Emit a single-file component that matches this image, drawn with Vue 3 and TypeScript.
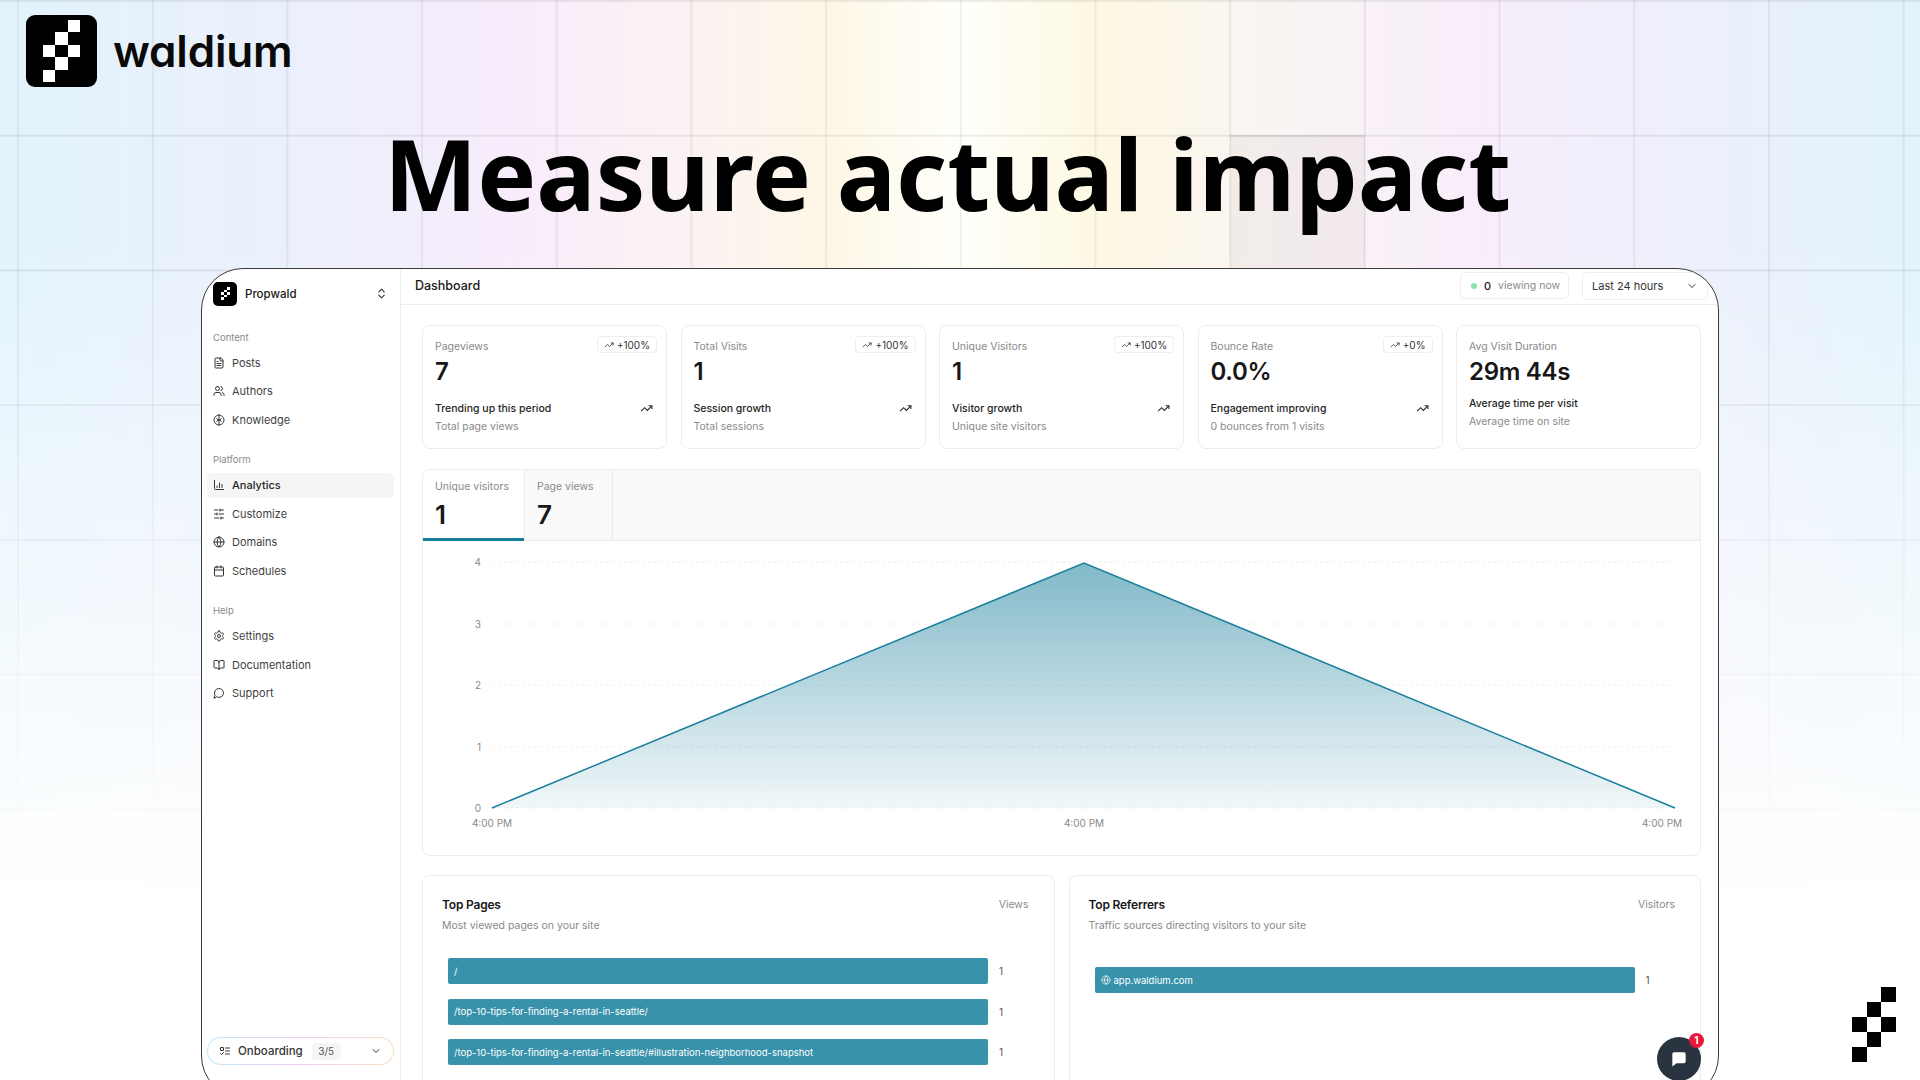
<script setup lang="ts">
const circle = 'M12 2a10 10 0 1 0 0 20 10 10 0 0 0 0-20'
const icons: Record<string, string[]> = {
  file: ['M15 2H6a2 2 0 0 0-2 2v16a2 2 0 0 0 2 2h12a2 2 0 0 0 2-2V7Z', 'M14 2v4a2 2 0 0 0 2 2h4', 'M10 9H8', 'M16 13H8', 'M16 17H8'],
  users: ['M16 21v-2a4 4 0 0 0-4-4H6a4 4 0 0 0-4 4v2', 'M9 3a4 4 0 1 0 0 8 4 4 0 0 0 0-8', 'M22 21v-2a4 4 0 0 0-3-3.87', 'M16 3.13a4 4 0 0 1 0 7.75'],
  knowledge: [circle, 'M12 2v20', 'M7.5 9.5 12 13l4.5-3.5', 'M7.5 14.5 12 11l4.5 3.5'],
  chart: ['M3 3v16a2 2 0 0 0 2 2h16', 'M8 17v-3', 'M13 17V8', 'M18 17v-6'],
  sliders: ['M21 4h-7', 'M10 4H3', 'M21 12h-9', 'M8 12H3', 'M21 20h-5', 'M12 20H3', 'M14 2v4', 'M8 10v4', 'M16 18v4'],
  globe: [circle, 'M12 2a14.5 14.5 0 0 0 0 20 14.5 14.5 0 0 0 0-20', 'M2 12h20'],
  calendar: ['M8 2v4', 'M16 2v4', 'M5 4h14a2 2 0 0 1 2 2v14a2 2 0 0 1-2 2H5a2 2 0 0 1-2-2V6a2 2 0 0 1 2-2', 'M3 10h18'],
  settings: ['M12.22 2h-.44a2 2 0 0 0-2 2v.18a2 2 0 0 1-1 1.73l-.43.25a2 2 0 0 1-2 0l-.15-.08a2 2 0 0 0-2.73.73l-.22.38a2 2 0 0 0 .73 2.73l.15.1a2 2 0 0 1 1 1.72v.51a2 2 0 0 1-1 1.74l-.15.09a2 2 0 0 0-.73 2.73l.22.38a2 2 0 0 0 2.73.73l.15-.08a2 2 0 0 1 2 0l.43.25a2 2 0 0 1 1 1.73V20a2 2 0 0 0 2 2h.44a2 2 0 0 0 2-2v-.18a2 2 0 0 1 1-1.73l.43-.25a2 2 0 0 1 2 0l.15.08a2 2 0 0 0 2.73-.73l.22-.39a2 2 0 0 0-.73-2.73l-.15-.08a2 2 0 0 1-1-1.74v-.5a2 2 0 0 1 1-1.74l.15-.09a2 2 0 0 0 .73-2.73l-.22-.38a2 2 0 0 0-2.73-.73l-.15.08a2 2 0 0 1-2 0l-.43-.25a2 2 0 0 1-1-1.73V4a2 2 0 0 0-2-2z', 'M12 9a3 3 0 1 0 0 6 3 3 0 0 0 0-6'],
  book: ['M12 7v14', 'M3 18a1 1 0 0 1-1-1V4a1 1 0 0 1 1-1h5a4 4 0 0 1 4 4 4 4 0 0 1 4-4h5a1 1 0 0 1 1 1v13a1 1 0 0 1-1 1h-6a3 3 0 0 0-3 3 3 3 0 0 0-3-3z'],
  message: ['M7.9 20A9 9 0 1 0 4 16.1L2 22Z'],
  trend: ['M22 7 13.5 15.5 8.5 10.5 2 17', 'M16 7h6v6'],
  updown: ['m7 15 5 5 5-5', 'm7 9 5-5 5 5'],
  down: ['m6 9 6 6 6-6'],
  todo: ['M4 5h4a1 1 0 0 1 1 1v4a1 1 0 0 1-1 1H4a1 1 0 0 1-1-1V6a1 1 0 0 1 1-1', 'm3 17 2 2 4-4', 'M13 6h8', 'M13 12h8', 'M13 18h8'],
}

const navGroups = [
  { label: 'Content', items: [{ name: 'Posts', icon: 'file' }, { name: 'Authors', icon: 'users' }, { name: 'Knowledge', icon: 'knowledge' }] },
  { label: 'Platform', items: [{ name: 'Analytics', icon: 'chart', active: true }, { name: 'Customize', icon: 'sliders' }, { name: 'Domains', icon: 'globe' }, { name: 'Schedules', icon: 'calendar' }] },
  { label: 'Help', items: [{ name: 'Settings', icon: 'settings' }, { name: 'Documentation', icon: 'book' }, { name: 'Support', icon: 'message' }] },
]

const stats = [
  { label: 'Pageviews', value: '7', delta: '+100%', title: 'Trending up this period', sub: 'Total page views' },
  { label: 'Total Visits', value: '1', delta: '+100%', title: 'Session growth', sub: 'Total sessions' },
  { label: 'Unique Visitors', value: '1', delta: '+100%', title: 'Visitor growth', sub: 'Unique site visitors' },
  { label: 'Bounce Rate', value: '0.0%', delta: '+0%', title: 'Engagement improving', sub: '0 bounces from 1 visits' },
  { label: 'Avg Visit Duration', value: '29m 44s', delta: '', title: 'Average time per visit', sub: 'Average time on site' },
]

const yTicks = [
  { label: '4', y: 21 },
  { label: '3', y: 83 },
  { label: '2', y: 144 },
  { label: '1', y: 206 },
  { label: '0', y: 267 },
]

const pages = ['/', '/top-10-tips-for-finding-a-rental-in-seattle/', '/top-10-tips-for-finding-a-rental-in-seattle/#illustration-neighborhood-snapshot']
const pixelCells = [2, 4, 6, 8, 10, 13]
const markCells = [2, 4, 6, 8, 10, 12]
</script>

<template>
  <div class="page">
    <div class="backdrop"><div class="hot-cell"></div></div>

    <header class="brand">
      <div class="logo">
        <div class="pixels">
          <i v-for="n in 15" :key="n" :class="{ on: markCells.includes(n - 1) }"></i>
        </div>
      </div>
      <span class="wordmark">waldium</span>
    </header>

    <h1 class="headline">Measure actual impact</h1>

    <div class="frame">
      <aside class="sidebar">
        <div class="workspace">
          <div class="ws-logo">
            <div class="pixels">
              <i v-for="n in 15" :key="n" :class="{ on: markCells.includes(n - 1) }"></i>
            </div>
          </div>
          <span class="ws-name">Propwald</span>
          <svg class="ws-toggle" viewBox="0 0 24 24"><path v-for="d in icons.updown" :key="d" :d="d" /></svg>
        </div>

        <nav class="nav">
          <section v-for="group in navGroups" :key="group.label" class="nav-group">
            <div class="nav-label">{{ group.label }}</div>
            <a v-for="item in group.items" :key="item.name" :class="['nav-item', { active: item.active }]">
              <svg class="nav-icon" viewBox="0 0 24 24"><path v-for="d in icons[item.icon]" :key="d" :d="d" /></svg>
              {{ item.name }}
            </a>
          </section>
        </nav>

        <div class="onboarding">
          <div class="onboarding-inner">
            <svg class="nav-icon" viewBox="0 0 24 24"><path v-for="d in icons.todo" :key="d" :d="d" /></svg>
            <span class="ob-text">Onboarding</span>
            <span class="ob-count">3/5</span>
            <svg class="ob-chevron" viewBox="0 0 24 24"><path v-for="d in icons.down" :key="d" :d="d" /></svg>
          </div>
        </div>
      </aside>

      <main class="main">
        <div class="topbar">
          <span class="topbar-title">Dashboard</span>
          <div class="live">
            <span class="live-dot"></span>
            <b>0</b>
            <span class="live-text">viewing now</span>
          </div>
          <div class="range">
            Last 24 hours
            <svg class="ob-chevron" viewBox="0 0 24 24"><path v-for="d in icons.down" :key="d" :d="d" /></svg>
          </div>
        </div>

        <div class="content">
          <div class="stats">
            <div v-for="s in stats" :key="s.label" :class="['stat', { compact: !s.delta }]">
              <div class="stat-label">{{ s.label }}</div>
              <div v-if="s.delta" class="delta">
                <svg viewBox="0 0 24 24"><path v-for="d in icons.trend" :key="d" :d="d" /></svg>
                {{ s.delta }}
              </div>
              <div class="stat-value">{{ s.value }}</div>
              <div class="stat-title">
                {{ s.title }}
                <svg v-if="s.delta" viewBox="0 0 24 24"><path v-for="d in icons.trend" :key="d" :d="d" /></svg>
              </div>
              <div class="stat-sub">{{ s.sub }}</div>
            </div>
          </div>

          <div class="chart-card">
            <div class="tabs">
              <div class="tab active">
                <span>Unique visitors</span>
                <b>1</b>
              </div>
              <div class="tab">
                <span>Page views</span>
                <b>7</b>
              </div>
            </div>
            <svg class="chart" width="1276" height="314" viewBox="0 0 1276 314">
              <defs>
                <linearGradient id="area" x1="0" y1="0" x2="0" y2="1">
                  <stop offset="0" stop-color="#1a7f9c" stop-opacity="0.55" />
                  <stop offset="1" stop-color="#1a7f9c" stop-opacity="0.06" />
                </linearGradient>
              </defs>
              <g v-for="t in yTicks" :key="t.label">
                <line x1="69" x2="1252" :y1="t.y" :y2="t.y" stroke="#efefef" stroke-dasharray="3 3" />
                <text x="58" :y="t.y + 4" text-anchor="end" class="tick">{{ t.label }}</text>
              </g>
              <path d="M69 267 L661 22 L1252 267 Z" fill="url(#area)" />
              <path d="M69 267 L661 22 L1252 267" fill="none" stroke="#1a7f9c" stroke-width="1.5" />
              <text x="69" y="286" text-anchor="middle" class="tick">4:00 PM</text>
              <text x="661" y="286" text-anchor="middle" class="tick">4:00 PM</text>
              <text x="1239" y="286" text-anchor="middle" class="tick">4:00 PM</text>
            </svg>
          </div>

          <div class="lists">
            <div class="list-card">
              <div class="list-head">
                <div>
                  <div class="list-title">Top Pages</div>
                  <div class="list-sub">Most viewed pages on your site</div>
                </div>
                <span class="list-unit">Views</span>
              </div>
              <div class="bars">
                <div v-for="p in pages" :key="p" class="bar-row">
                  <div class="bar">{{ p }}</div>
                  <span class="bar-count">1</span>
                </div>
              </div>
            </div>
            <div class="list-card">
              <div class="list-head">
                <div>
                  <div class="list-title">Top Referrers</div>
                  <div class="list-sub">Traffic sources directing visitors to your site</div>
                </div>
                <span class="list-unit">Visitors</span>
              </div>
              <div class="bars refs">
                <div class="bar-row">
                  <div class="bar">
                    <svg viewBox="0 0 24 24"><path v-for="d in icons.globe" :key="d" :d="d" /></svg>
                    app.waldium.com
                  </div>
                  <span class="bar-count">1</span>
                </div>
              </div>
            </div>
          </div>
        </div>
      </main>
    </div>

    <button class="chat">
      <svg viewBox="0 0 24 24"><path d="M6 4h12a2 2 0 0 1 2 2v9a2 2 0 0 1-2 2H9l-5 4V6a2 2 0 0 1 2-2z" /></svg>
      <span class="chat-badge">1</span>
    </button>

    <div class="corner-mark pixels">
      <i v-for="n in 15" :key="n" :class="{ on: markCells.includes(n - 1) }"></i>
    </div>
  </div>
</template>

<style scoped>
.page {
  position: relative;
  width: 1920px;
  height: 1080px;
  overflow: hidden;
  background: #fff;
  font-family: Inter, "Liberation Sans", sans-serif;
  color: #171717;
}

.backdrop {
  position: absolute;
  inset: 0;
  background-image:
    linear-gradient(to bottom, rgba(255, 255, 255, 0) 22%, #fff 84%),
    linear-gradient(rgba(0, 0, 0, 0.07) 2px, transparent 2px),
    linear-gradient(90deg, rgba(0, 0, 0, 0.06) 2px, transparent 2px),
    linear-gradient(90deg, #e2f3fc 0, #eaf0fc 270px, #f8ecfb 520px, #fbf3f2 700px, #fdf7e6 830px, #fffffa 960px, #fdf8e2 1100px, #faf5f2 1250px, #f7edfb 1500px, #ebf0fb 1720px, #e2f3fb 1920px);
  background-size: auto, 134.7px 134.7px, 134.7px 134.7px, auto;
  background-position: 0 0, 0 0, 17px 0, 0 0;
}

.hot-cell {
  position: absolute;
  left: 1230px;
  top: 135px;
  width: 135px;
  height: 135px;
  background: rgba(60, 30, 50, 0.04);
  box-shadow: inset 0 3px 2px -1px rgba(0, 0, 0, 0.08);
}

.brand {
  position: relative;
  display: flex;
  align-items: center;
  gap: 16px;
  padding: 15px 0 0 26px;
}

.logo {
  width: 71px;
  height: 72px;
  border-radius: 9px;
  background: #000;
  display: flex;
  align-items: center;
  justify-content: center;
}

.pixels {
  display: grid;
  grid-template-columns: repeat(3, 1fr);
  grid-template-rows: repeat(5, 1fr);
}

.logo .pixels {
  width: 37px;
  height: 62px;
}

.pixels i.on {
  background: #fff;
}

.wordmark {
  font-size: 44px;
  font-weight: 600;
  letter-spacing: -0.2px;
  font-feature-settings: "cv11";
  color: #0a0a0a;
}

.headline {
  position: relative;
  margin: 0;
  height: 181px;
  padding-right: 25px;
  box-sizing: border-box;
  text-align: center;
  font-family: "Noto Sans", sans-serif;
  font-size: 99px;
  font-weight: 700;
  line-height: 172px;
  color: #000;
}

.frame {
  position: relative;
  width: 1518px;
  height: 830px;
  margin: 0 auto;
  box-sizing: border-box;
  display: flex;
  background: #fff;
  border: 1.5px solid #3a3a3a;
  border-radius: 42px;
  overflow: hidden;
}

.sidebar {
  width: 199px;
  flex: none;
  box-sizing: border-box;
  border-right: 1px solid #ececec;
  padding: 12.5px 6px 32px 5px;
  display: flex;
  flex-direction: column;
}

.workspace {
  display: flex;
  align-items: center;
  gap: 8px;
  padding-left: 6px;
  margin-bottom: 24px;
}

.ws-logo {
  width: 24px;
  height: 24px;
  border-radius: 5px;
  background: #000;
  display: flex;
  align-items: center;
  justify-content: center;
}

.ws-logo .pixels {
  width: 9px;
  height: 13px;
}

.ws-name {
  font-size: 11.5px;
  font-weight: 500;
  flex: 1;
}

.ws-toggle {
  width: 13px;
  height: 13px;
  margin-right: 6px;
  fill: none;
  stroke: #333;
  stroke-width: 2;
  stroke-linecap: round;
  stroke-linejoin: round;
}

.nav {
  flex: 1;
}

.nav-group {
  margin-bottom: 20px;
}

.nav-label {
  height: 16px;
  line-height: 16px;
  padding-left: 6px;
  margin-bottom: 4.5px;
  font-size: 9.5px;
  color: #8a8a8a;
}

.nav-item {
  display: flex;
  align-items: center;
  gap: 7px;
  height: 25px;
  margin-bottom: 3.5px;
  padding-left: 6px;
  border-radius: 5px;
  font-size: 11px;
  color: #3f3f3f;
}

.nav-item.active {
  background: #f5f5f5;
  color: #262626;
  font-weight: 500;
}

.nav-icon {
  width: 12px;
  height: 12px;
  flex: none;
  fill: none;
  stroke: #333;
  stroke-width: 2;
  stroke-linecap: round;
  stroke-linejoin: round;
}

.onboarding {
  padding: 1px;
  height: 28px;
  box-sizing: border-box;
  border-radius: 14px;
  background: linear-gradient(90deg, #bfe9fb, #f5cdf6 50%, #fbdcc0);
}

.onboarding-inner {
  height: 100%;
  border-radius: 13px;
  background: #fff;
  display: flex;
  align-items: center;
  padding: 0 11px;
}

.ob-text {
  margin-left: 7px;
  font-size: 11.5px;
  font-weight: 500;
  color: #333;
}

.ob-count {
  margin-left: 9px;
  width: 29px;
  height: 17px;
  line-height: 17px;
  text-align: center;
  border-radius: 4px;
  background: #f5f5f5;
  font-size: 10px;
  color: #555;
}

.ob-chevron {
  margin-left: auto;
  width: 12px;
  height: 12px;
  fill: none;
  stroke: #333;
  stroke-width: 2;
  stroke-linecap: round;
  stroke-linejoin: round;
}

.main {
  flex: 1;
  min-width: 0;
}

.topbar {
  height: 36px;
  box-sizing: border-box;
  border-bottom: 1px solid #ececec;
  display: flex;
  align-items: center;
  gap: 13px;
  padding: 0 10px 2px 14px;
}

.topbar-title {
  flex: 1;
  font-size: 12.5px;
  font-weight: 500;
}

.live {
  width: 109px;
  height: 27px;
  box-sizing: border-box;
  border: 1px solid #eee;
  border-radius: 5px;
  display: flex;
  align-items: center;
  padding-left: 10px;
  font-size: 11px;
}

.live-dot {
  width: 6px;
  height: 6px;
  border-radius: 50%;
  background: #86e5ab;
  margin-right: 7px;
}

.live b {
  font-weight: 500;
  margin-right: 7px;
}

.live-text {
  font-size: 10.5px;
  color: #8a8a8a;
}

.range {
  width: 126px;
  height: 28px;
  box-sizing: border-box;
  border: 1px solid #eee;
  border-radius: 5px;
  display: flex;
  align-items: center;
  padding: 0 9px;
  font-size: 11px;
  color: #333;
}

.content {
  padding: 20px 17px 0 21px;
}

.stats {
  display: grid;
  grid-template-columns: repeat(5, 1fr);
  gap: 13.5px;
  margin-bottom: 20px;
}

.stat {
  position: relative;
  height: 124px;
  box-sizing: border-box;
  border: 1px solid #ececec;
  border-radius: 8px;
  padding: 13px 12px 0;
}

.stat-label {
  font-size: 10.5px;
  line-height: 16px;
  color: #8a8a8a;
}

.delta {
  position: absolute;
  top: 10px;
  right: 9px;
  height: 17px;
  box-sizing: border-box;
  border: 1px solid #eee;
  border-radius: 4px;
  padding: 0 6px;
  display: flex;
  align-items: center;
  gap: 3px;
  font-size: 10px;
  color: #333;
}

.delta svg {
  width: 10px;
  height: 10px;
  fill: none;
  stroke: #333;
  stroke-width: 2;
}

.stat-value {
  margin-top: 3px;
  font-size: 24px;
  line-height: 28px;
  font-weight: 600;
  letter-spacing: -0.3px;
}

.stat-title {
  margin-top: 14px;
  display: flex;
  align-items: center;
  justify-content: space-between;
  height: 16px;
  padding-right: 1px;
  font-size: 10.5px;
  font-weight: 500;
  color: #262626;
}

.stat-title svg {
  width: 13px;
  height: 13px;
  fill: none;
  stroke: #262626;
  stroke-width: 2;
}

.stat-sub {
  margin-top: 3px;
  font-size: 10.5px;
  line-height: 16px;
  color: #8a8a8a;
}

.compact .stat-title {
  margin-top: 9px;
}

.chart-card {
  height: 387px;
  box-sizing: border-box;
  border: 1px solid #ececec;
  border-radius: 8px;
  overflow: hidden;
  margin-bottom: 19px;
}

.tabs {
  display: flex;
  height: 71px;
  box-sizing: border-box;
  background: #f9f9f9;
  border-bottom: 1px solid #ececec;
}

.tab {
  padding: 9px 18px 0 12px;
  border-right: 1px solid #ececec;
  display: flex;
  flex-direction: column;
  font-size: 10.5px;
  color: #8a8a8a;
}

.tab span {
  line-height: 16px;
}

.tab b {
  margin-top: 5px;
  font-size: 26px;
  line-height: 30px;
  font-weight: 600;
  color: #171717;
}

.tab.active {
  background: #fff;
  width: 101px;
  box-sizing: border-box;
  padding-right: 0;
  box-shadow: inset 0 -3px 0 #1a7f9c;
  height: 71px;
  border-right: none;
}

.tab.active + .tab {
  border-left: 1px solid #ececec;
}

.chart {
  display: block;
}

.tick {
  font-family: Inter, "Liberation Sans", sans-serif;
  font-size: 10px;
  fill: #8a8a8a;
}

.lists {
  display: grid;
  grid-template-columns: 1fr 1fr;
  gap: 14px;
}

.list-card {
  height: 300px;
  box-sizing: border-box;
  border: 1px solid #ececec;
  border-radius: 8px;
  padding: 20px 25px 0 19px;
}

.list-head {
  display: flex;
  justify-content: space-between;
  align-items: flex-start;
}

.list-title {
  font-size: 12px;
  line-height: 18px;
  font-weight: 600;
  letter-spacing: -0.2px;
}

.list-sub {
  margin-top: 4px;
  font-size: 10.5px;
  line-height: 16px;
  color: #8a8a8a;
}

.list-unit {
  font-size: 10.5px;
  line-height: 18px;
  color: #8a8a8a;
}

.bars {
  margin: 24px 0 0 6px;
  display: flex;
  flex-direction: column;
  gap: 14.5px;
}

.bars.refs {
  margin-top: 33px;
}

.bar-row {
  display: flex;
  align-items: center;
  gap: 11px;
}

.bar {
  width: 540px;
  height: 26px;
  border-radius: 2px;
  background: #3892ab;
  display: flex;
  align-items: center;
  gap: 3px;
  padding-left: 6px;
  box-sizing: border-box;
  color: #fff;
  font-size: 9.5px;
}

.bar svg {
  width: 10px;
  height: 10px;
  fill: none;
  stroke: #fff;
  stroke-width: 1.6;
}

.bar-count {
  font-size: 10px;
  color: #555;
}

.chat {
  position: absolute;
  left: 1657px;
  top: 1037px;
  width: 44px;
  height: 44px;
  padding: 0;
  border: none;
  border-radius: 50%;
  background: #2a3441;
  display: flex;
  align-items: center;
  justify-content: center;
}

.chat svg {
  width: 20px;
  height: 20px;
  fill: #fff;
}

.chat-badge {
  position: absolute;
  top: -4px;
  right: -3px;
  width: 15px;
  height: 15px;
  border-radius: 50%;
  background: #e8173a;
  color: #fff;
  font-family: Inter, sans-serif;
  font-size: 10px;
  font-weight: 700;
  line-height: 15px;
  text-align: center;
}

.corner-mark {
  position: absolute;
  left: 1852px;
  top: 987px;
  width: 44px;
  height: 75px;
}

.corner-mark i.on {
  background: #000;
}
</style>

<style>
html,
body {
  margin: 0;
  background: #fff;
}
</style>
